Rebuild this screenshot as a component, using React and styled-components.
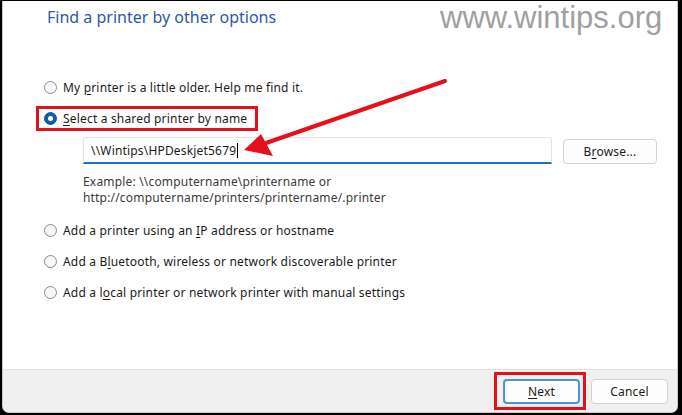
import React from 'react';
import styled, { createGlobalStyle } from 'styled-components';

const GlobalStyle = createGlobalStyle`
  html, body {
    margin: 0;
    padding: 0;
    background: #000;
  }
  body {
    font-family: "Noto Sans", "Open Sans", sans-serif;
  }
`;

const Frame = styled.div`
  position: relative;
  box-sizing: border-box;
  width: 682px;
  height: 415px;
  padding: 1px 4px 3px 2px;
  background: #000;
`;

const Window = styled.div`
  display: flex;
  flex-direction: column;
  height: 100%;
  background: #fff;
  border: 1px solid #c9c9c9;
  border-top: none;
  border-radius: 0 0 7px 7px;
  overflow: hidden;
`;

const Content = styled.div`
  flex: 1;
  padding: 5px 0 0 33px;
  font-size: 12px;
  letter-spacing: 0.18px;
  color: #1b1b1b;
`;

const Title = styled.h1`
  margin: 0 0 47px 11px;
  font-size: 16px;
  font-weight: 400;
  line-height: 22px;
  letter-spacing: 0;
  color: #2f57a8;
`;

const OptionList = styled.div`
  display: flex;
  flex-direction: column;
  align-items: flex-start;
  gap: 6px;
`;

const OptionRow = styled.label`
  display: inline-flex;
  align-items: center;
  gap: 6px;
  height: 19px;
  padding: 0 8px 0 5px;
  border: 3px solid ${(p) => (p.$highlight ? '#e5101b' : 'transparent')};
  white-space: nowrap;
  line-height: 19px;
`;

const Radio = styled.span`
  display: flex;
  align-items: center;
  justify-content: center;
  box-sizing: border-box;
  width: 13px;
  height: 13px;
  border-radius: 50%;
  border: 1px solid ${(p) => (p.$checked ? '#0f5ca8' : '#8c8c8c')};
  background: ${(p) => (p.$checked ? '#0f5ca8' : '#f7f7f7')};

  &::after {
    content: '';
    display: ${(p) => (p.$checked ? 'block' : 'none')};
    width: 5px;
    height: 5px;
    border-radius: 50%;
    background: #fff;
  }
`;

const Key = styled.span`
  text-decoration: underline;
  text-underline-offset: 2px;
`;

const SubPanel = styled.div`
  margin: 6px 0 12px 47px;
`;

const InputRow = styled.div`
  display: flex;
  align-items: flex-start;
  gap: 11px;
`;

const TextInput = styled.div`
  box-sizing: border-box;
  width: 469px;
  height: 27px;
  padding: 0 7px;
  display: flex;
  align-items: center;
  border: 1px solid #e3e3e3;
  border-bottom: 2px solid #1f6fc5;
  border-radius: 3px 3px 0 0;
  color: #1b1b1b;
`;

const Caret = styled.span`
  display: inline-block;
  width: 1px;
  height: 15px;
  margin-left: 1px;
  background: #000;
`;

const Button = styled.button`
  box-sizing: border-box;
  width: ${(p) => p.$width || 77}px;
  height: 25px;
  margin-top: ${(p) => p.$offset || 0}px;
  padding: 0;
  font-family: inherit;
  font-size: 12px;
  letter-spacing: 0.18px;
  color: #1b1b1b;
  background: #fdfdfd;
  border: ${(p) => (p.$primary ? '2px solid #4d93d9' : '1px solid #d2d2d2')};
  border-radius: 4px;
`;

const Highlight = styled.span`
  display: inline-flex;
  padding: 4px 3px 3px 6px;
  border: 3px solid #e5101b;
`;

const Example = styled.p`
  margin: 10px 0 0;
  line-height: 16px;
  color: #3a3a3a;
`;

const Footer = styled.div`
  display: flex;
  justify-content: flex-end;
  align-items: center;
  gap: 5px;
  height: 43px;
  padding: 0 9px 0 0;
  box-sizing: border-box;
  background: #f0f0f0;
  border-top: 1px solid #e2e2e2;
`;

const Watermark = styled.div`
  position: absolute;
  top: 0;
  left: 440px;
  font-family: "Liberation Sans", Arial, sans-serif;
  font-size: 31px;
  line-height: 36px;
  color: #a0a0a0;
  pointer-events: none;
`;

const ArrowLayer = styled.svg`
  position: absolute;
  top: 0;
  left: 0;
  pointer-events: none;
`;

const Option = ({ checked, highlight, children }) => (
  <OptionRow $highlight={highlight}>
    <Radio $checked={checked} />
    <span>{children}</span>
  </OptionRow>
);

const App = () => (
  <>
    <GlobalStyle />
    <Frame>
      <Window>
        <Content>
          <Title>Find a printer by other options</Title>
          <OptionList>
            <Option>
              My <Key>p</Key>rinter is a little older. Help me find it.
            </Option>
            <Option checked highlight>
              <Key>S</Key>elect a shared printer by name
            </Option>
          </OptionList>

          <SubPanel>
            <InputRow>
              <TextInput>
                {'\\\\Wintips\\HPDeskjet5679'}
                <Caret />
              </TextInput>
              <Button $width={94} $offset={2}>
                B<Key>r</Key>owse...
              </Button>
            </InputRow>
            <Example>
              {'Example: \\\\computername\\printername or'}
              <br />
              http://computername/printers/printername/.printer
            </Example>
          </SubPanel>

          <OptionList>
            <Option>
              Add a printer using an <Key>I</Key>P address or hostname
            </Option>
            <Option>
              Add a B<Key>l</Key>uetooth, wireless or network discoverable printer
            </Option>
            <Option>
              Add a l<Key>o</Key>cal printer or network printer with manual settings
            </Option>
          </OptionList>
        </Content>

        <Footer>
          <Highlight>
            <Button $primary>
              <Key>N</Key>ext
            </Button>
          </Highlight>
          <Button>Cancel</Button>
        </Footer>
      </Window>

      <Watermark>www.wintips.org</Watermark>

      <ArrowLayer width="682" height="415" viewBox="0 0 682 415">
        <line x1="445" y1="81" x2="266" y2="143" stroke="#e5101b" strokeWidth="4" strokeLinecap="round" />
        <polygon points="244,150 261,134 273,156" fill="#e5101b" />
      </ArrowLayer>
    </Frame>
  </>
);

export default App;
